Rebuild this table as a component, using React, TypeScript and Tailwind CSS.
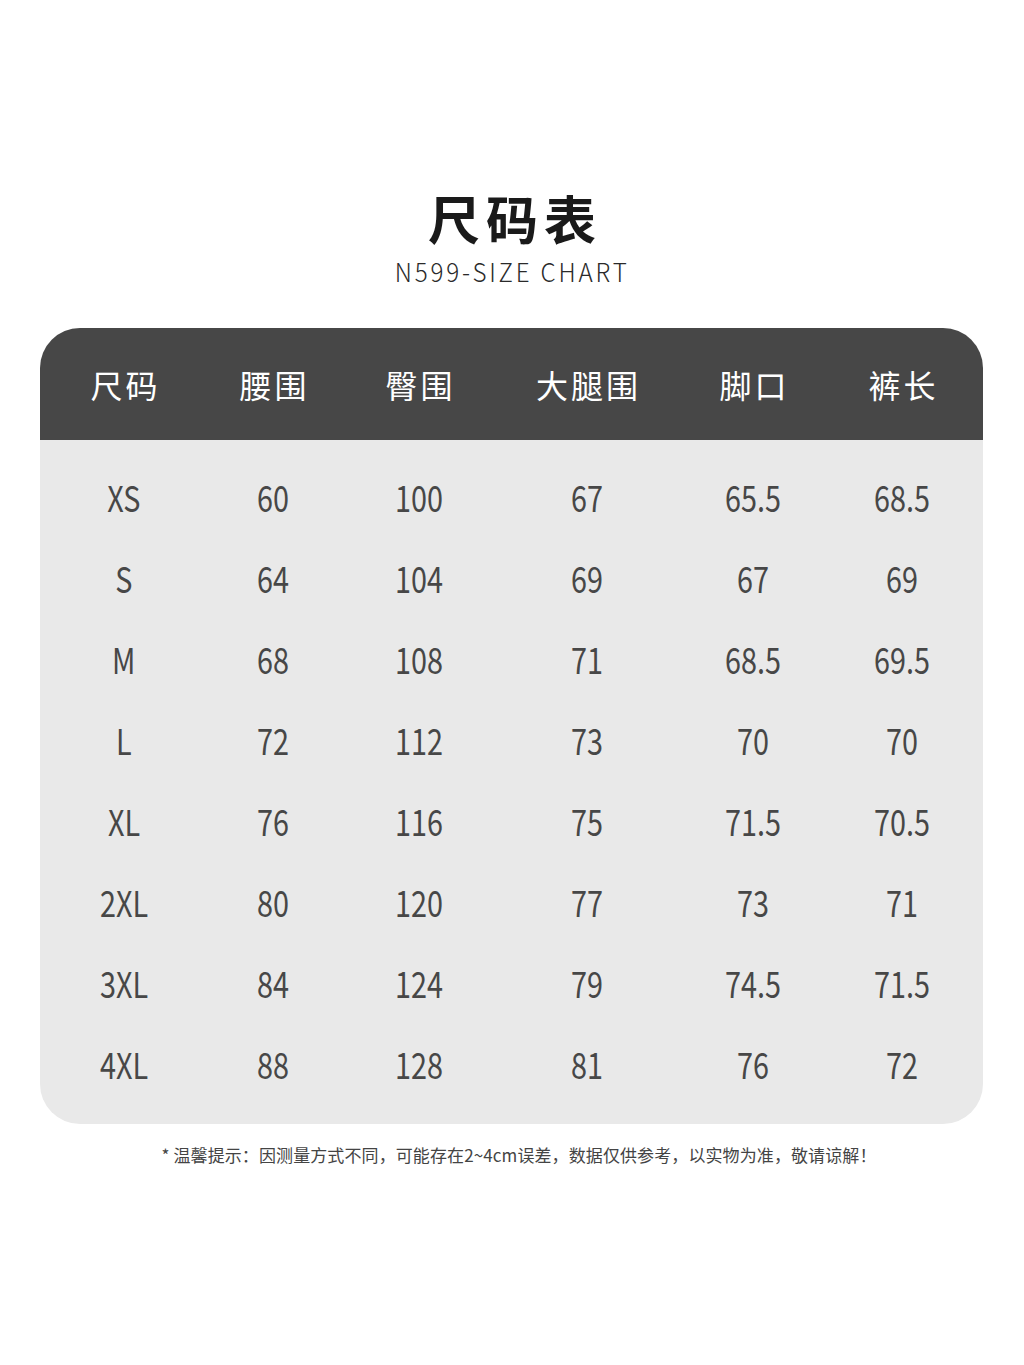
import React from "react";

const headers = ["尺码", "腰围", "臀围", "大腿围", "脚口", "裤长"];
const rows = [
  ["XS", "60", "100", "67", "65.5", "68.5"],
  ["S", "64", "104", "69", "67", "69"],
  ["M", "68", "108", "71", "68.5", "69.5"],
  ["L", "72", "112", "73", "70", "70"],
  ["XL", "76", "116", "75", "71.5", "70.5"],
  ["2XL", "80", "120", "77", "73", "71"],
  ["3XL", "84", "124", "79", "74.5", "71.5"],
  ["4XL", "88", "128", "81", "76", "72"],
];

const cjk = "font-['Noto_Sans_CJK_SC','Noto_Sans',sans-serif]";

export default function App() {
  return (
    <div className={`w-[1024px] h-[1365px] bg-white ${cjk} flex flex-col items-center`}>
      <div className="pt-[186px] flex flex-col items-center">
        <div className="text-[52px] leading-[64px] font-bold text-[#1a1a1a] tracking-[6px] pl-[6px]">尺码表</div>
        <div className="mt-[5px] text-[26px] leading-[32px] font-light text-[#2a2a2a] tracking-[3px] inline-block scale-x-[0.93]">
          N599-SIZE CHART
        </div>
      </div>
      <div className="mt-[41px] w-[943px] self-start ml-[40px] rounded-[40px] overflow-hidden bg-[#e9e9e9]">
        <div className="h-[112px] bg-[#474747] grid grid-cols-[168px_130px_162px_174px_158px_140px] items-center">
          {headers.map((h) => (
            <div key={h} className="text-center text-white text-[32px] tracking-[3px] pl-[3px] font-normal">
              {h}
            </div>
          ))}
        </div>
        <div className="pt-[15px] pb-[21px]">
          {rows.map((r) => (
            <div key={r[0]} className="h-[81px] grid grid-cols-[168px_130px_162px_174px_158px_140px] items-center">
              {r.map((c, i) => (
                <div key={i} className="text-center text-[36px] text-[#474747] font-normal">
                  <span className="inline-block scale-x-[0.8]">{c}</span>
                </div>
              ))}
            </div>
          ))}
        </div>
      </div>
      <div className="mt-[19px] pl-[14px] text-[17px] leading-[24px] text-[#444] tracking-[0.1px]">
        * 温馨提示：因测量方式不同，可能存在2~4cm误差，数据仅供参考，以实物为准，敬请谅解！
      </div>
    </div>
  );
}
